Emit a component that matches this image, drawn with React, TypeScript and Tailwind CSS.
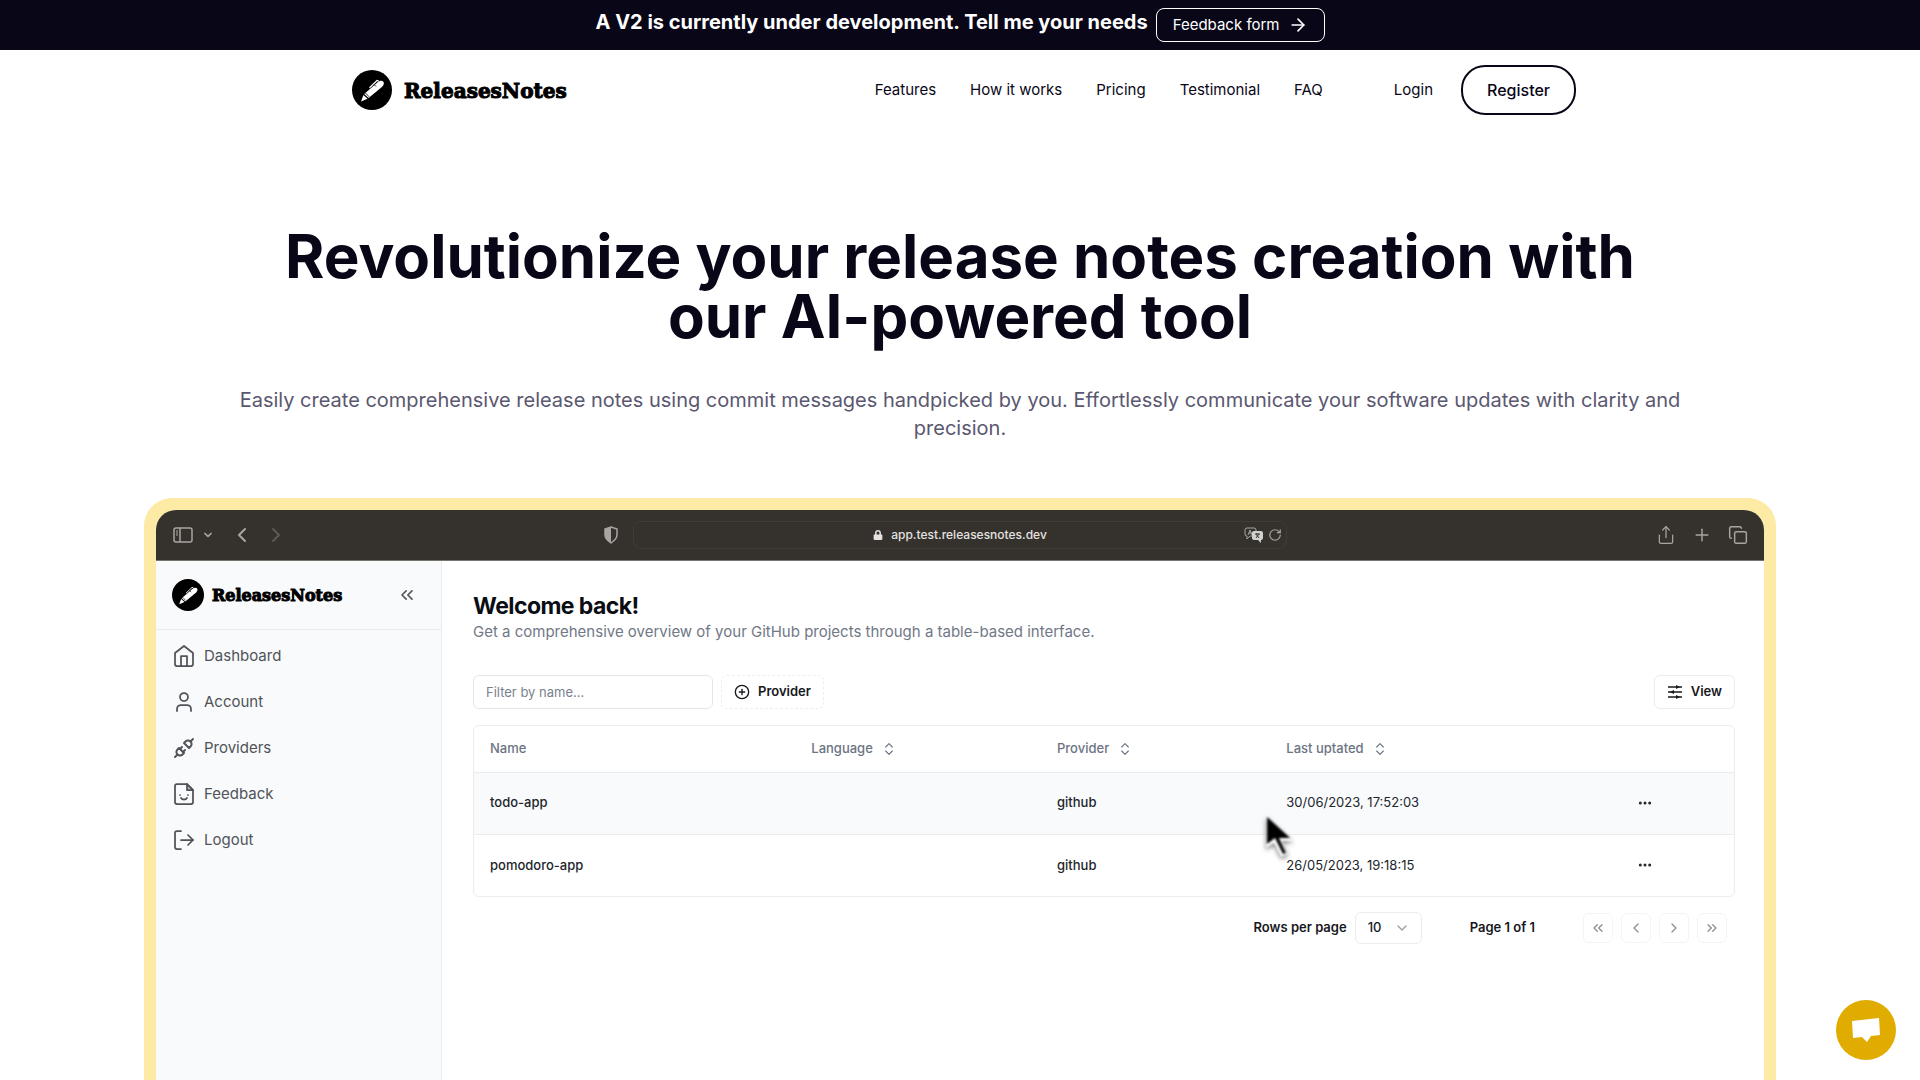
import { TbPlugConnected } from "react-icons/tb";
import { FaLock } from "react-icons/fa";
import {
  ArrowRight,
  ChevronDown,
  ChevronLeft,
  ChevronRight,
  ChevronsLeft,
  ChevronsRight,
  ChevronsUpDown,
  CirclePlus,
  Copy,
  Ellipsis,
  LogOut,
  Plus,
  RotateCw,
  Share,
  User,
} from "lucide-react";

const navLinks = ["Features", "How it works", "Pricing", "Testimonial", "FAQ"];

const projects = [
  { name: "todo-app", provider: "github", updated: "30/06/2023, 17:52:03", active: true },
  { name: "pomodoro-app", provider: "github", updated: "26/05/2023, 19:18:15", active: false },
];

const PenMark = ({ className }: { className: string }) => (
  <svg viewBox="0 0 40 40" className={className} aria-hidden="true">
    <circle cx="20" cy="20" r="20" fill="#000" />
    <path d="M9 31.5l2.4-6.5 4.2 3.8z" fill="#fff" />
    <path d="M12.2 24L25.4 12.4c2-1.6 4.4-2.2 5.8-.8 1.3 1.4.6 3.4-1 5.200L16.600 28z" fill="#fff" />
    <path d="M17.500 17.800l7.500-7.300 1.800.6" fill="none" stroke="#fff" strokeWidth="1.2" />
    <path d="M22 14.500l2 2M13.500 23l3.600 3.800" stroke="#000" strokeWidth="0.800" />
  </svg>
);

const HomeIcon = () => (
  <svg
    viewBox="0 0 24 24"
    className="size-6"
    fill="none"
    stroke="currentColor"
    strokeWidth="1.75"
    strokeLinecap="round"
    strokeLinejoin="round"
    aria-hidden="true"
  >
    <path d="M3 9l9-7 9 7v11a2 2 0 0 1-2 2H5a2 2 0 0 1-2-2z" />
    <path d="M9 22V12h6v10" />
  </svg>
);

const FeedbackIcon = () => (
  <svg
    viewBox="0 0 24 24"
    className="size-6"
    fill="none"
    stroke="currentColor"
    strokeWidth="1.75"
    strokeLinecap="round"
    strokeLinejoin="round"
    aria-hidden="true"
  >
    <path d="M15 2H5a2 2 0 0 0-2 2v16a2 2 0 0 0 2 2h14a2 2 0 0 0 2-2V8z" />
    <path d="M15 2v6h6z" fill="currentColor" fillOpacity="0.4" />
    <path d="M8 13h.01M16 13h.01M9 16s1 1.500 3 1.500 3-1.500 3-1.500" />
  </svg>
);

const MixerIcon = () => (
  <svg viewBox="0 0 16 16" className="size-4" fill="none" stroke="currentColor" aria-hidden="true">
    <path d="M1 3h14M1 8h14M1 13h14" strokeWidth="1.3" />
    <path d="M9 1l4 2-4 2zM7 6L3 8l4 2zM9 11l4 2-4 2z" fill="currentColor" stroke="none" />
  </svg>
);

const PanelIcon = () => (
  <svg viewBox="0 0 20 16" className="h-4 w-5" fill="none" stroke="currentColor" aria-hidden="true">
    <rect x="1" y="1" width="18" height="14" rx="2" strokeWidth="1.5" />
    <path d="M7 1v14" strokeWidth="1.5" />
    <path d="M3 4h2M3 6h2M3 8h2" />
  </svg>
);

const ShieldIcon = () => (
  <svg viewBox="0 0 16 18" className="h-[18px] w-4" aria-hidden="true">
    <path d="M8 1l6 2v6c0 4-3 6-6 8-3-2-6-4-6-8V3z" fill="none" stroke="currentColor" strokeWidth="1.5" />
    <path d="M8 1v16c-3-2-6-4-6-8V3z" fill="currentColor" />
  </svg>
);

const TranslateIcon = () => (
  <svg viewBox="0 0 20 16" className="h-4 w-5" aria-hidden="true">
    <path d="M3 1h7a2 2 0 0 1 2 2v6H6l-3 3v-3a2 2 0 0 1-2-2V3a2 2 0 0 1 2-2z" fill="none" stroke="currentColor" />
    <path d="M4 8l2-5 2 5M5 6h3" fill="none" stroke="currentColor" />
    <path d="M10 4h7a2 2 0 0 1 2 2v5a2 2 0 0 1-2 2v3l-3-3h-4a2 2 0 0 1-2-2V6a2 2 0 0 1 2-2z" fill="#d2d1cf" />
    <path d="M11 7h5M13 6v1M12 11l3-4M15 11l-3-4" fill="none" stroke="#35322d" />
  </svg>
);

const CursorIcon = () => (
  <svg
    viewBox="0 0 32 48"
    className="absolute -top-11 -left-6 h-12 w-8 blur-[1px] drop-shadow-[0_2px_2px_rgba(0,0,0,0.5)]"
    aria-hidden="true"
  >
    <path d="M4 3v32l8-5 7 14 7-3-6-13h11z" fill="#fff" />
    <path d="M5 4v27l8-6 8 16 3-1-7-15h11z" fill="#000" />
  </svg>
);

const sidebarLinks = [
  { label: "Dashboard", icon: <HomeIcon /> },
  { label: "Account", icon: <User className="size-6" strokeWidth={1.75} /> },
  { label: "Providers", icon: <TbPlugConnected className="size-6" /> },
  { label: "Feedback", icon: <FeedbackIcon /> },
  { label: "Logout", icon: <LogOut className="size-6" strokeWidth={1.75} /> },
];

const Banner = () => (
  <div className="flex h-[50px] items-start justify-center gap-2 bg-[#090617] pt-2 text-white">
    <p className="text-xl leading-7 font-bold">
      A V2 is currently under development. Tell me your needs
    </p>
    <a
      href="#feedback"
      className="flex h-[34px] items-center gap-2 rounded-lg border border-white px-4 text-[15px]"
    >
      Feedback form
      <ArrowRight className="size-5" />
    </a>
  </div>
);

const Header = () => (
  <header className="mx-auto flex h-20 w-full max-w-[1232px] items-center justify-between">
    <a href="#home" className="flex items-center gap-3 pl-2">
      <PenMark className="size-10" />
      <span className="pt-px font-['DejaVu_Serif',serif] text-xl font-bold text-black [-webkit-text-stroke:1px_black]">
        ReleasesNotes
      </span>
    </a>
    <nav className="flex items-center text-[15px]">
      <div className="flex gap-[34px]">
        {navLinks.map((link) => (
          <a key={link} href="#section">
            {link}
          </a>
        ))}
      </div>
      <a href="#login" className="ml-[71px]">
        Login
      </a>
      <a
        href="#register"
        className="ml-7 flex h-[50px] items-center rounded-3xl border-2 border-[#090617] px-6 text-base font-medium"
      >
        Register
      </a>
    </nav>
  </header>
);

const BrowserBar = () => (
  <div className="flex h-[51px] items-center border-b border-[#77746f] bg-[#35322d] px-4 text-[#a8a6a2]">
    <div className="flex flex-1 items-center">
      <span className="px-px">
        <PanelIcon />
      </span>
      <ChevronDown className="ml-2 size-3" strokeWidth={3.5} />
      <ChevronLeft className="ml-4 size-6" strokeWidth={2} />
      <ChevronRight className="ml-[10px] size-6 text-[#5c5954]" strokeWidth={2} />
      <span className="mr-[14px] ml-auto">
        <ShieldIcon />
      </span>
    </div>
    <div className="flex h-7 w-[41.5%] items-center rounded-lg border border-[#403d38] px-1">
      <span className="w-12" />
      <span className="flex flex-1 items-center justify-center gap-2 text-xs font-medium text-[#e4e3e1]">
        <FaLock className="size-[10px]" />
        app.test.releasesnotes.dev
      </span>
      <span className="flex w-12 items-center justify-end gap-1">
        <TranslateIcon />
        <RotateCw className="size-[14px]" strokeWidth={2} />
      </span>
    </div>
    <div className="flex flex-1 items-center justify-end gap-4">
      <Share className="size-5" strokeWidth={1.5} />
      <Plus className="size-5" strokeWidth={1.75} />
      <Copy className="size-5" strokeWidth={1.75} />
    </div>
  </div>
);

const Sidebar = () => (
  <aside className="w-[286px] shrink-0 border-r border-[#e8ecef] bg-[#f8fafc]">
    <div className="flex h-[69px] items-center border-b border-[#e8ecef] px-4">
      <PenMark className="size-8" />
      <span className="ml-2 pt-px font-['DejaVu_Serif',serif] text-base font-bold text-black [-webkit-text-stroke:1px_black]">
        ReleasesNotes
      </span>
      <button type="button" aria-label="Collapse sidebar" className="mr-2 ml-auto text-[#55585c]">
        <ChevronsLeft className="size-5" strokeWidth={2} />
      </button>
    </div>
    <nav className="flex flex-col gap-[22px] px-4 pt-[14px] text-[#505358]">
      {sidebarLinks.map(({ label, icon }) => (
        <a key={label} href="#app" className="flex h-6 items-center gap-2 text-[15px]">
          {icon}
          <span>{label}</span>
        </a>
      ))}
    </nav>
  </aside>
);

const SortHeader = ({ label }: { label: string }) => (
  <button type="button" className="flex items-center gap-2">
    {label}
    <ChevronsUpDown className="size-4" strokeWidth={1.75} />
  </button>
);

const ProjectsTable = () => (
  <div className="mt-4 rounded-md border border-[#e9edf0]">
    <table className="w-full table-fixed text-left text-[13px]">
      <colgroup>
        <col className="w-[25.5%]" />
        <col className="w-[19.5%]" />
        <col className="w-[18.2%]" />
        <col className="w-[27.8%]" />
        <col />
      </colgroup>
      <thead className="text-[#6c7483]">
        <tr className="h-[46px] border-b border-[#e9edf0]">
          <th className="px-4 font-medium">Name</th>
          <th className="px-4 font-medium">
            <SortHeader label="Language" />
          </th>
          <th className="px-4 font-medium">
            <SortHeader label="Provider" />
          </th>
          <th className="px-4 font-medium">
            <SortHeader label="Last uptated" />
          </th>
          <th />
        </tr>
      </thead>
      <tbody className="font-medium text-[#22252b]">
        {projects.map((project) => (
          <tr
            key={project.name}
            className={`h-[62px] border-b border-[#e9edf0] last:border-b-0 ${
              project.active ? "bg-[#f8fafc]" : ""
            }`}
          >
            <td className="px-4">{project.name}</td>
            <td className="px-4" />
            <td className="px-4">{project.provider}</td>
            <td className="px-4 font-normal">
              <span className="relative">
                {project.updated}
                {!project.active && <CursorIcon />}
              </span>
            </td>
            <td className="px-4">
              <button type="button" aria-label="Open menu" className="flex">
                <Ellipsis className="size-4" strokeWidth={2.5} />
              </button>
            </td>
          </tr>
        ))}
      </tbody>
    </table>
  </div>
);

const pageButton = "flex size-[30px] items-center justify-center rounded-md border border-[#f3f4f6]";

const Pagination = () => (
  <div className="mt-[15px] flex items-center justify-end pr-2 text-[13px] font-semibold text-[#16181d]">
    <label htmlFor="rows">Rows per page</label>
    <div className="relative ml-2">
      <select
        id="rows"
        className="h-8 w-[67px] appearance-none rounded-md border border-[#e9edf0] bg-white px-3 font-medium"
      >
        <option>10</option>
      </select>
      <ChevronDown className="pointer-events-none absolute top-2 right-3 size-4 text-[#9a9da2]" />
    </div>
    <span className="mx-12">Page 1 of 1</span>
    <div className="flex gap-2 text-[#8d9096]">
      <button type="button" aria-label="First page" className={pageButton}>
        <ChevronsLeft className="size-4" />
      </button>
      <button type="button" aria-label="Previous page" className={pageButton}>
        <ChevronLeft className="size-4" />
      </button>
      <button type="button" aria-label="Next page" className={pageButton}>
        <ChevronRight className="size-4" />
      </button>
      <button type="button" aria-label="Last page" className={pageButton}>
        <ChevronsRight className="size-4" />
      </button>
    </div>
  </div>
);

const AppPreview = () => (
  <div className="mx-auto w-[85%] rounded-t-[28px] border-12 border-b-0 border-[#fdeaa4] bg-[#fdeaa4]">
    <div className="overflow-hidden rounded-t-[20px] bg-white">
      <BrowserBar />
      <div className="flex min-h-[900px]">
        <Sidebar />
        <section className="flex-1 pt-[31px] pr-[29px] pl-[31px]">
          <h2 className="text-[23px] leading-7 font-bold tracking-tight text-[#0b0d14]">
            Welcome back!
          </h2>
          <p className="text-[15px] leading-6 text-[#717886]">
            Get a comprehensive overview of your GitHub projects through a table-based interface.
          </p>
          <div className="mt-[31px] flex gap-2 text-[13px]">
            <input
              type="text"
              aria-label="Filter by name"
              placeholder="Filter by name..."
              className="h-[34px] w-[240px] rounded-md border border-[#e3e7ea] px-3 placeholder:text-[#7a818d]"
            />
            <button
              type="button"
              className="flex h-[34px] items-center gap-2 rounded-md border border-dashed border-[#eceef0] px-3 font-semibold text-[#16181d]"
            >
              <CirclePlus className="size-4" />
              Provider
            </button>
            <button
              type="button"
              className="ml-auto flex h-[34px] items-center gap-2 rounded-md border border-[#e9edf0] px-3 font-semibold text-[#16181d]"
            >
              <MixerIcon />
              View
            </button>
          </div>
          <ProjectsTable />
          <Pagination />
        </section>
      </div>
    </div>
  </div>
);

const ChatButton = () => (
  <button
    type="button"
    aria-label="Open chat"
    className="fixed right-6 bottom-5 flex size-[60px] items-center justify-center rounded-full bg-[#e0ac00]"
  >
    <svg viewBox="0 0 30 26" className="h-[26px] w-[30px]" aria-hidden="true">
      <path d="M1 4l27-3 1 17-9 1-4 6-5-5-9 1z" fill="#fff" />
    </svg>
  </button>
);

export default function App() {
  return (
    <div className="h-screen overflow-hidden bg-white font-['Inter',sans-serif] text-[#090617]">
      <Banner />
      <Header />
      <main>
        <div className="mx-auto max-w-[1460px] pt-24 text-center">
          <h1 className="text-6xl leading-[60px] font-bold">
            Revolutionize your release notes creation with our AI-powered tool
          </h1>
          <p className="mt-10 mb-14 text-xl leading-7 text-[#5a5770]">
            Easily create comprehensive release notes using commit messages handpicked by you.
            Effortlessly communicate your software updates with clarity and precision.
          </p>
        </div>
        <AppPreview />
      </main>
      <ChatButton />
    </div>
  );
}
